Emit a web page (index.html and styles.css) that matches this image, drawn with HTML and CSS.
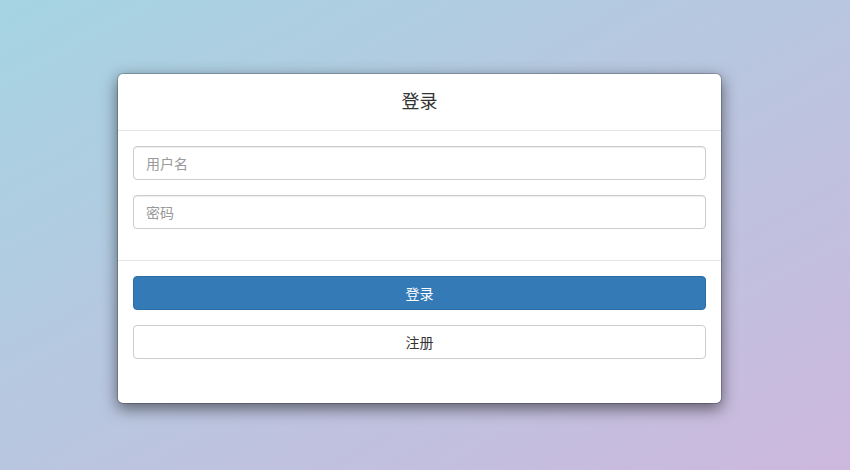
FILE: index.html
```html
<!DOCTYPE html>
<html lang="zh-CN">
<head>
<meta charset="utf-8">
<title>登录</title>
<link rel="stylesheet" href="styles.css">
</head>
<body>
<div class="page">
  <div class="modal">
    <div class="modal-header">
      <h4 class="modal-title">登录</h4>
    </div>
    <div class="modal-body">
      <div class="form-group"><input class="form-control" type="text" placeholder="用户名"></div>
      <div class="form-group"><input class="form-control" type="password" placeholder="密码"></div>
    </div>
    <div class="modal-footer">
      <button class="btn btn-primary">登录</button>
      <button class="btn btn-default">注册</button>
    </div>
  </div>
</div>
</body>
</html>
```
FILE: styles.css
```css
* { box-sizing: border-box; }
html, body { margin: 0; padding: 0; height: 100%; }
body {
  font-family: "Noto Sans CJK SC", "Liberation Sans", sans-serif;
  font-size: 14px;
  line-height: 1.42857;
  color: #333;
  background: linear-gradient(to bottom right, #a5d4e2, #cdb8dd);
}
.page {
  height: 470px;
  padding-top: 73px;
  padding-left: 117px;
}
.modal {
  width: 605px;
  background: #fff;
  border: 1px solid rgba(0,0,0,.2);
  border-radius: 6px;
  box-shadow: 0 5px 15px rgba(0,0,0,.5);
  background-clip: padding-box;
}
.modal-header {
  padding: 13px 15px 17px;
  border-bottom: 1px solid #e5e5e5;
  text-align: center;
}
.modal-title {
  margin: 0;
  font-size: 18px;
  font-weight: 400;
  line-height: 26px;
  color: #333;
}
.modal-body {
  padding: 15px 15px 16px;
}
.form-group { margin-bottom: 15px; }
.form-control {
  display: block;
  width: 100%;
  height: 34px;
  padding: 6px 12px;
  font-family: inherit;
  font-size: 14px;
  color: #555;
  background: #fff;
  border: 1px solid #ccc;
  border-radius: 4px;
  box-shadow: inset 0 1px 1px rgba(0,0,0,.075);
  outline: none;
}
.form-control::placeholder { color: #999; }
.modal-footer {
  border-top: 1px solid #e5e5e5;
  padding: 15px 15px 44px;
  display: flex;
  flex-direction: column;
  gap: 15px;
}
.btn {
  display: block;
  width: 100%;
  height: 34px;
  padding: 6px 12px;
  font-family: inherit;
  font-size: 14px;
  line-height: 20px;
  border: 1px solid transparent;
  border-radius: 4px;
  cursor: pointer;
}
.btn-primary { color: #fff; background: #337ab7; border-color: #2e6da4; }
.btn-default { color: #333; background: #fff; border-color: #ccc; }
```
